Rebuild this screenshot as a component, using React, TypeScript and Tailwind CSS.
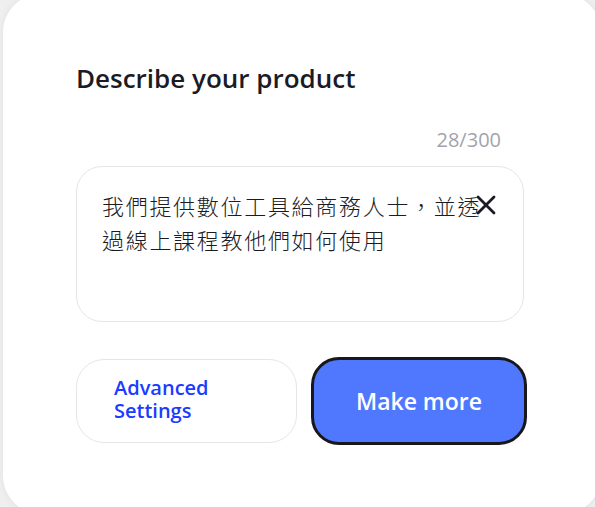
import { X } from "lucide-react";

const font = { fontFamily: "'Open Sans', 'Noto Sans CJK TC', sans-serif" };

export default function App() {
  return (
    <div className="h-[507px] w-[595px] overflow-hidden bg-[#efefef]">
      <div
        className="ml-[3px] -mt-[6px] h-[520px] w-[598px] rounded-[38px] bg-white pl-[73px] pt-[68px] shadow-[0_0_8px_rgba(0,0,0,0.06)]"
        style={font}
      >
        <div className="flex w-[452px] flex-col">
          <h1 className="text-[26px] font-semibold leading-[32px] text-[#1b1b25]">
            Describe your product
          </h1>

          <div className="mt-[32px] w-[448px] pr-[23px] text-right text-[20px] leading-[28px] text-[#a3a3ab]">
            28/300
          </div>

          <div className="relative mt-[12px] h-[156px] w-[448px] rounded-[26px] border border-[#e6e6e9] pl-[25px] pt-[21px]">
            <p
              className="w-[390px] text-[22px] leading-[34px] tracking-[1.7px] text-[#1b1b25]"
              style={{ fontFamily: "'Noto Sans CJK TC', sans-serif", fontWeight: 300 }}
            >
              我們提供數位工具給商務人士，並透過線上課程教他們如何使用
            </p>
            <button className="absolute right-[21px] top-[22px] text-[#1b1b25]">
              <X size={32} strokeWidth={2.1} />
            </button>
          </div>

          <div className="mt-[35px] flex h-[88px] items-center gap-[14px]">
            <button className="h-[84px] w-[221px] shrink-0 rounded-[28px] border border-[#e6e6e9] bg-white pb-[4px] pl-[37px] text-left text-[20px] font-semibold leading-[23px] text-[#1a3cff]">
              Advanced
              <br />
              Settings
            </button>
            <button className="h-[88px] w-[216px] shrink-0 rounded-[28px] border-[3px] border-[#17171c] bg-[#5078ff] text-[23px] font-semibold text-white">
              Make more
            </button>
          </div>
        </div>
      </div>
    </div>
  );
}
